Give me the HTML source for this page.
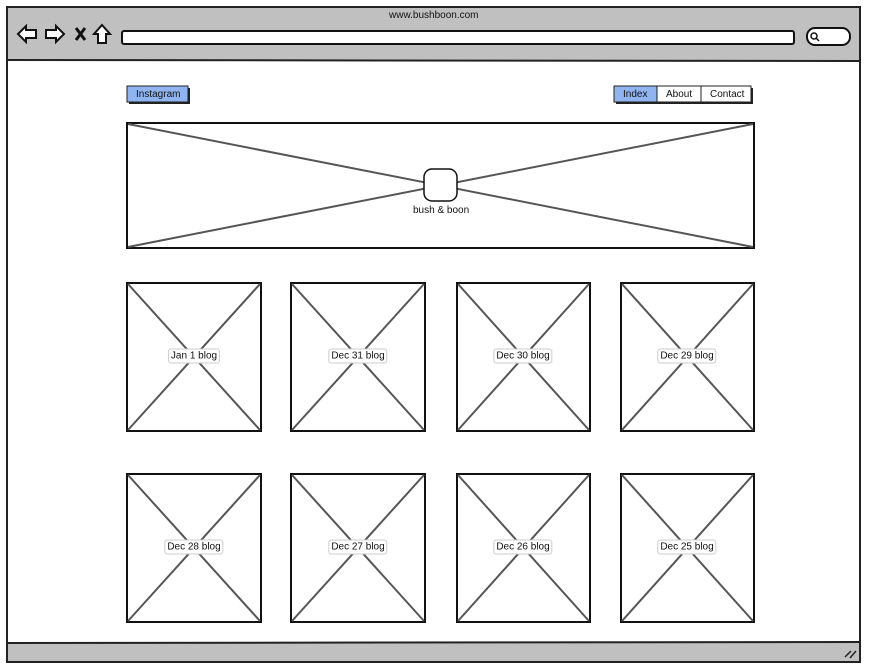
<!DOCTYPE html>
<html><head><meta charset="utf-8"><style>
body{margin:0;width:871px;height:672px;background:#fff;overflow:hidden;font-family:"Liberation Sans",sans-serif;}
svg{position:absolute;left:0;top:0}
.t{position:absolute;font-size:10px;color:#111;white-space:nowrap}
.lbl{position:absolute;font-size:10px;background:#fff;border:1px solid #ccc;border-radius:3px;padding:1px 2px;transform:translate(-50%,-50%);color:#111}
</style></head><body>
<svg width="871" height="672">
<rect x="7" y="7" width="853" height="655" fill="#fff" stroke="#222" stroke-width="2"/>
<rect x="8" y="8" width="851" height="52" fill="#c0c0c0"/>
<line x1="7" y1="60" x2="860" y2="61" stroke="#222" stroke-width="2"/>
<rect x="8" y="643" width="851" height="18" fill="#c0c0c0"/>
<line x1="7" y1="643" x2="860" y2="642" stroke="#222" stroke-width="2"/>
<path d="M845 657 L851 651 M850 658 L856 651" stroke="#222" stroke-width="1.5"/>
<!-- nav icons -->
<path d="M18 34 L26 26 L26 30 L36 30 L36 38 L26 38 L26 42 Z" fill="#fff" stroke="#111" stroke-width="2"/>
<path d="M64 34 L56 26 L56 30 L46 30 L46 38 L56 38 L56 42 Z" fill="#fff" stroke="#111" stroke-width="2"/>
<path d="M76 28 L85 40 M85 28 L76 40" stroke="#111" stroke-width="3"/>
<path d="M102 25 L110 34 L106 34 L106 43 L98 43 L98 34 L94 34 Z" fill="#fff" stroke="#111" stroke-width="2"/>
<rect x="122" y="31" width="672" height="13" rx="2" fill="#fff" stroke="#111" stroke-width="2"/>
<rect x="807" y="28" width="43" height="17" rx="8" fill="#fff" stroke="#111" stroke-width="2"/>
<circle cx="814" cy="36" r="3" fill="none" stroke="#111" stroke-width="1.5"/>
<line x1="816" y1="38" x2="819" y2="41" stroke="#111" stroke-width="1.5"/>
<!-- buttons -->
<rect x="129" y="88" width="61" height="16" fill="#222"/>
<rect x="127" y="86" width="61" height="16" fill="#8fb4f0" stroke="#222"/>
<rect x="616" y="88" width="137" height="16" fill="#222"/>
<rect x="614" y="86" width="43" height="16" fill="#8fb4f0" stroke="#222"/>
<rect x="657" y="86" width="44" height="16" fill="#fff" stroke="#222"/>
<rect x="701" y="86" width="50" height="16" fill="#fff" stroke="#222"/>
<!-- banner -->
<rect x="127" y="123" width="627" height="125" fill="#fff" stroke="#111" stroke-width="2"/>
<path d="M128 124 L753 247 M128 247 L753 124" stroke="#555" stroke-width="2"/>
<rect x="424" y="169" width="33" height="32" rx="8" fill="#fff" stroke="#111" stroke-width="1.5"/>
<g stroke="#555" stroke-width="2" fill="none">
<rect x="127" y="283" width="134" height="148" fill="#fff" stroke="#111"/><path d="M128 284 L260 430 M128 430 L260 284"/>
<rect x="291" y="283" width="134" height="148" fill="#fff" stroke="#111"/><path d="M292 284 L424 430 M292 430 L424 284"/>
<rect x="457" y="283" width="133" height="148" fill="#fff" stroke="#111"/><path d="M458 284 L589 430 M458 430 L589 284"/>
<rect x="621" y="283" width="133" height="148" fill="#fff" stroke="#111"/><path d="M622 284 L753 430 M622 430 L753 284"/>
<rect x="127" y="474" width="134" height="148" fill="#fff" stroke="#111"/><path d="M128 475 L260 621 M128 621 L260 475"/>
<rect x="291" y="474" width="134" height="148" fill="#fff" stroke="#111"/><path d="M292 475 L424 621 M292 621 L424 475"/>
<rect x="457" y="474" width="133" height="148" fill="#fff" stroke="#111"/><path d="M458 475 L589 621 M458 621 L589 475"/>
<rect x="621" y="474" width="133" height="148" fill="#fff" stroke="#111"/><path d="M622 475 L753 621 M622 621 L753 475"/>
</g>
</svg>
<div class="t" style="left:389px;top:10px">www.bushboon.com</div>
<div class="t" style="left:136px;top:89px">Instagram</div>
<div class="t" style="left:623px;top:89px">Index</div>
<div class="t" style="left:666px;top:89px">About</div>
<div class="t" style="left:710px;top:89px">Contact</div>
<div class="t" style="left:413px;top:205px">bush &amp; boon</div>
<div class="lbl" style="left:194px;top:356px">Jan 1 blog</div>
<div class="lbl" style="left:358px;top:356px">Dec 31 blog</div>
<div class="lbl" style="left:523px;top:356px">Dec 30 blog</div>
<div class="lbl" style="left:687px;top:356px">Dec 29 blog</div>
<div class="lbl" style="left:194px;top:547px">Dec 28 blog</div>
<div class="lbl" style="left:358px;top:547px">Dec 27 blog</div>
<div class="lbl" style="left:523px;top:547px">Dec 26 blog</div>
<div class="lbl" style="left:687px;top:547px">Dec 25 blog</div>
</body></html>
